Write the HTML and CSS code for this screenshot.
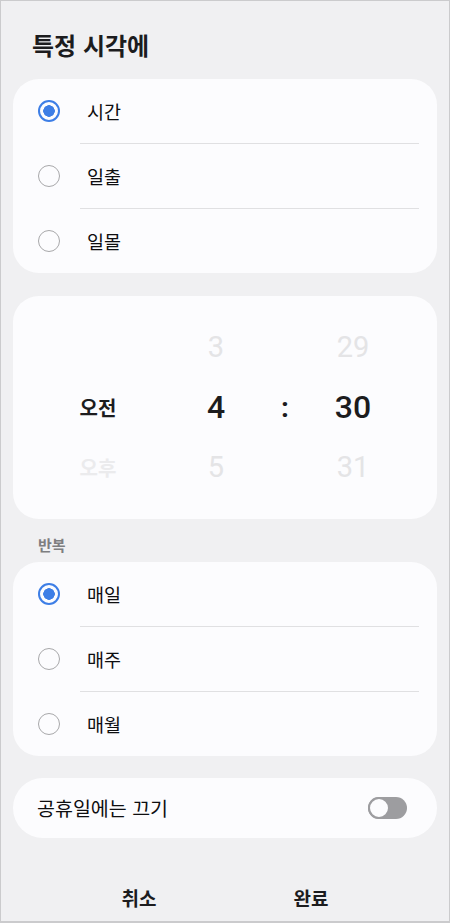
FILE: index.html
```html
<!DOCTYPE html>
<html lang="ko">
<head>
    <meta charset="UTF-8">
    <meta name="viewport" content="width=device-width, initial-scale=1.0">
    <title>특정 시각에</title>
    <link rel="stylesheet" href="styles.css">
</head>
<body>
    <div class="screen">
        <h1 class="title">특정 시각에</h1>

        <!-- 기준 시각 -->
        <div class="card">
            <div class="row">
                <span class="radio checked"></span>
                <span class="label">시간</span>
            </div>
            <div class="divider"></div>
            <div class="row">
                <span class="radio"></span>
                <span class="label">일출</span>
            </div>
            <div class="divider"></div>
            <div class="row">
                <span class="radio"></span>
                <span class="label">일몰</span>
            </div>
        </div>

        <!-- 시간 선택 -->
        <div class="card picker">
            <div class="col ampm">
                <span class="cell"></span>
                <span class="cell current">오전</span>
                <span class="cell faded">오후</span>
            </div>
            <div class="col num">
                <span class="cell faded">3</span>
                <span class="cell current">4</span>
                <span class="cell faded">5</span>
            </div>
            <div class="col colon">
                <span class="cell"></span>
                <span class="cell current">:</span>
                <span class="cell"></span>
            </div>
            <div class="col num">
                <span class="cell faded">29</span>
                <span class="cell current">30</span>
                <span class="cell faded">31</span>
            </div>
        </div>

        <div class="section">반복</div>
        <div class="card repeat">
            <div class="row">
                <span class="radio checked"></span>
                <span class="label">매일</span>
            </div>
            <div class="divider"></div>
            <div class="row">
                <span class="radio"></span>
                <span class="label">매주</span>
            </div>
            <div class="divider"></div>
            <div class="row">
                <span class="radio"></span>
                <span class="label">매월</span>
            </div>
        </div>

        <div class="card switch-row">
            <span class="label">공휴일에는 끄기</span>
            <span class="toggle"><span class="knob"></span></span>
        </div>

        <div class="footer">
            <button class="btn">취소</button>
            <button class="btn">완료</button>
        </div>
    </div>
</body>
</html>
```

FILE: styles.css
```css
body {
    margin: 0;
    background: #f0f0f2;
    font-family: "Noto Sans CJK KR", "Noto Sans", sans-serif;
    color: #1c1c1e;
}

.screen {
    box-sizing: border-box;
    width: 450px;
    height: 923px;
    padding: 0 12px;
    border: 1px solid #cbcbcd;
    border-bottom-width: 2px;
    overflow: hidden;
}

.title {
    margin: 29px 0 19px 19px;
    font-size: 24px;
    line-height: 30px;
    font-weight: 700;
}

.card {
    background: #fcfcfe;
    border-radius: 26px;
    margin-bottom: 23px;
}

.row {
    display: flex;
    align-items: center;
    height: 64px;
    padding-left: 25px;
}

.radio {
    box-sizing: border-box;
    width: 22px;
    height: 22px;
    border: 1.5px solid #a8a8aa;
    border-radius: 50%;
    margin-right: 27px;
    flex-shrink: 0;
}

.radio.checked {
    border: 2px solid #3d7ee6;
    background: radial-gradient(circle, #3d7ee6 0 5.5px, transparent 6px);
}

.label {
    font-size: 18.5px;
    line-height: 24px;
    color: #0e0e10;
}

.divider {
    height: 1px;
    background: #e0e0e2;
    margin: 0 18px 0 67px;
}

/* 시간 선택 */
.picker {
    display: grid;
    grid-template-columns: 120px 116px 22px 114px;
    padding: 21px 0 22px 25px;
    margin-bottom: 0;
}

.col {
    display: flex;
    flex-direction: column;
    align-items: center;
}

.cell {
    height: 60px;
    display: flex;
    align-items: center;
    justify-content: center;
}

.ampm .cell {
    font-size: 20px;
    font-weight: 700;
}

.num .cell, .colon .cell {
    font-family: Roboto, "Noto Sans", sans-serif;
    font-size: 29px;
}

.num .cell.current {
    font-size: 32px;
    font-weight: 500;
}

.colon .cell.current {
    font-size: 28px;
    font-weight: 700;
}

.faded {
    color: #e4e4e6;
}

.ampm .faded {
    color: #ebebed;
}

.section {
    padding: 15px 0 7px 25px;
    font-size: 15px;
    line-height: 21px;
    font-weight: 700;
    color: #7e7e80;
}

.repeat {
    margin-bottom: 22px;
}

.switch-row {
    display: flex;
    align-items: center;
    justify-content: space-between;
    height: 60px;
    padding: 0 30px 0 24px;
    border-radius: 30px;
    margin-bottom: 0;
}

.switch-row .label {
    font-size: 19.5px;
}

.toggle {
    position: relative;
    width: 39px;
    height: 22px;
    border-radius: 11px;
    background: #9d9da0;
}

.knob {
    position: absolute;
    left: 0;
    top: 0;
    box-sizing: border-box;
    width: 22px;
    height: 22px;
    border-radius: 50%;
    background: #fcfcfe;
    border: 2px solid #9d9da0;
}

.footer {
    display: flex;
    margin: 48px -12px 0;
    padding: 0 52px;
}

.btn {
    flex: 1;
    border: none;
    background: none;
    padding: 0;
    font-family: inherit;
    font-size: 19px;
    line-height: 24px;
    font-weight: 700;
    color: #1c1c1e;
}
```
